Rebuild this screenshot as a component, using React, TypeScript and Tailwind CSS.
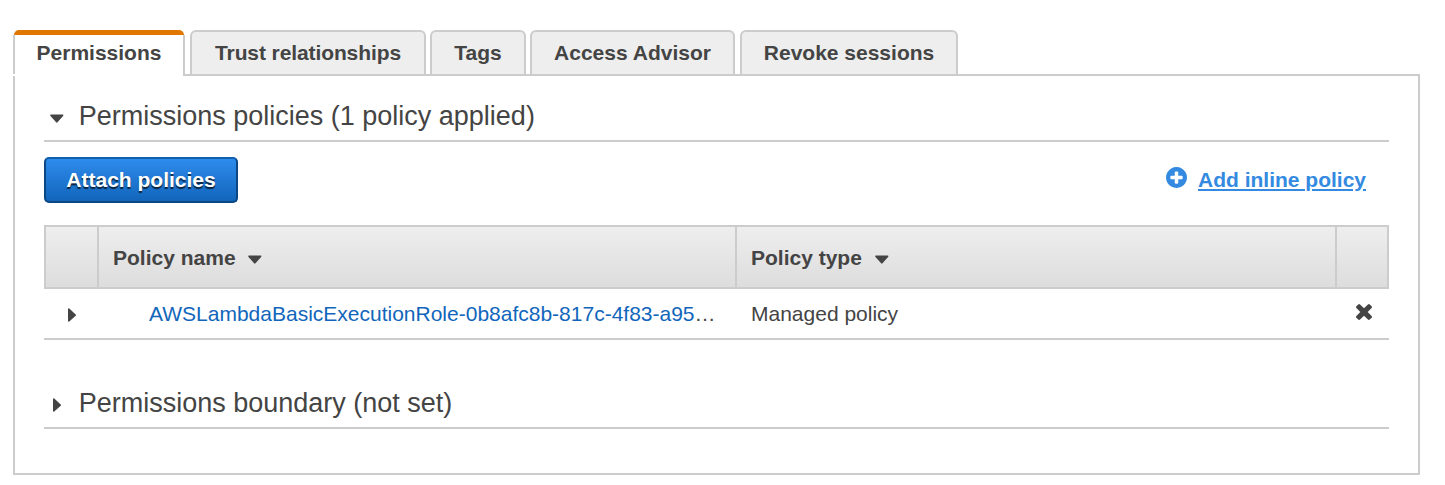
import React from "react";

const TABS = [
  { label: "Trust relationships", box: "ml-[5px] w-[236px] tracking-[-0.1px]" },
  { label: "Tags", box: "ml-[4px] w-[96px]" },
  { label: "Access Advisor", box: "ml-[4px] w-[205px]" },
  { label: "Revoke sessions", box: "ml-[5px] w-[218px]" },
];

function CaretDown({ className = "" }: { className?: string }) {
  return (
    <svg viewBox="0 0 14 9" className={`h-[9px] w-[14px] shrink-0 fill-[#444] ${className}`}>
      <path d="M.9 .5H12.700q1.200 .4 .4 1.400L7.500 8.300q-.7 .7-1.400 0L.5 1.900Q-.3 .9 .9 .5z" />
    </svg>
  );
}

function CaretRight({ className = "" }: { className?: string }) {
  return (
    <svg viewBox="0 0 9 14" className={`h-[14px] w-[9px] shrink-0 fill-[#444] ${className}`}>
      <path d="M0 1Q.3-.2 1.300 .6L7.700 6.400q.6 .7 0 1.400L1.300 13.500Q.3 14.300 0 13.100z" />
    </svg>
  );
}

function PlusCircle() {
  return (
    <svg viewBox="128 128 1536 1536" className="mb-[5px] h-[21px] w-[21px] fill-[#338ae0]">
      <path d="M1344 960v-128q0-26-19-45t-45-19h-256v-256q0-26-19-45t-45-19h-128q-26 0-45 19t-19 45v256h-256q-26 0-45 19t-19 45v128q0 26 19 45t45 19h256v256q0 26 19 45t45 19h128q26 0 45-19t19-45v-256h256q26 0 45-19t19-45zm320-64q0 209-103 385.500t-279.500 279.500-385.500 103-385.500-103-279.500-279.500-103-385.500 103-385.500 279.500-279.500 385.500-103 385.500 103 279.500 279.500 103 385.500z" />
    </svg>
  );
}

function Remove() {
  return (
    <svg viewBox="110 366 1188 1188" className="mb-[3px] h-4 w-4 fill-[#444]">
      <path d="M1298 1322q0 40-28 68l-136 136q-28 28-68 28t-68-28l-294-294-294 294q-28 28-68 28t-68-28l-136-136q-28-28-28-68t28-68l294-294-294-294q-28-28-28-68t28-68l136-136q28-28 68-28t68 28l294 294 294-294q28-28 68-28t68 28l136 136q28 28 28 68t-28 68l-294 294 294 294q28 28 28 68z" />
    </svg>
  );
}

export default function App() {
  return (
    <div className="h-[485px] w-[1445px] bg-white pl-[13px] pt-[30px] font-['Liberation_Sans',Arial,sans-serif] text-[21px] leading-6 text-[#444]">
      <div className="relative z-10 flex h-[46px] w-[1407px] whitespace-nowrap font-bold">
        <button className="flex h-[46px] w-[172px] flex-col">
          <span className="mx-px block h-[5px] self-stretch rounded-t-[5px] bg-[#e07700]" />
          <span className="block h-[41px] self-stretch rounded-br-[3px] border-x-2 border-b-2 border-[#ccc] bg-white pt-[6px]">
            Permissions
          </span>
          <span className="-mt-[2px] mr-[2px] block h-[2px] self-stretch bg-white" />
        </button>
        {TABS.map((tab) => (
          <button
            key={tab.label}
            className={`h-[44px] rounded-t-[6px] border-2 border-b-0 border-[#ccc] bg-[#eee] ${tab.box}`}
          >
            {tab.label}
          </button>
        ))}
      </div>

      <main className="-mt-[2px] h-[401px] w-[1407px] border-2 border-[#ccc] pl-[29px] pt-[16px]">
        <section className="w-[1345px]">
          <h2 className="flex h-[50px] items-center border-b-2 border-[#ccc] pl-[6px] text-[27px]">
            <CaretDown className="mt-[5px]" />
            <span className="ml-[14.7px]">Permissions policies (1 policy applied)</span>
          </h2>

          <div className="mt-[15px] flex h-[46px] items-center justify-between pr-[23px] font-bold">
            <button className="h-[46px] w-[194px] rounded-[5px] border-2 border-[#0d4783] border-t-[#1160b0] bg-linear-to-b from-[#2e8bec] to-[#1166bb] text-white [text-shadow:0_2px_1px_rgba(0,0,0,0.7)]">
              Attach policies
            </button>
            <a className="flex items-center gap-[11px] text-[#338ae0]">
              <PlusCircle />
              <span className="underline decoration-2 underline-offset-[2px]">Add inline policy</span>
            </a>
          </div>

          <div className="mt-[22px]">
            <div className="grid h-[64px] grid-cols-[53px_638px_600px_50px] divide-x-2 divide-[#ccc] border-2 border-[#ccc] bg-linear-to-b from-[#eee] to-[#ddd] font-bold">
              <div />
              <div className="flex items-center pl-[14px] pt-[2px]">
                Policy name <CaretDown className="ml-[12px] mt-[3px]" />
              </div>
              <div className="flex items-center pl-[14px] pt-[2px]">
                Policy type <CaretDown className="ml-[13px] mt-[3px]" />
              </div>
              <div />
            </div>
            <div className="grid h-[51px] grid-cols-[105px_602px_605px_33px] items-center border-b-2 border-[#ccc]">
              <CaretRight className="ml-[24px] mt-[3px]" />
              <span>
                <a className="text-[#1166bb]">AWSLambdaBasicExecutionRole-0b8afc8b-817c-4f83-a95</a>…
              </span>
              <span>Managed policy</span>
              <Remove />
            </div>
          </div>
        </section>

        <section className="mt-[37px] w-[1345px]">
          <h2 className="flex h-[52px] items-center border-b-2 border-[#ccc] pl-[9px] pt-[2px] text-[27px]">
            <CaretRight className="mt-[4px]" />
            <span className="ml-[16.7px]">Permissions boundary (not set)</span>
          </h2>
        </section>
      </main>
    </div>
  );
}
